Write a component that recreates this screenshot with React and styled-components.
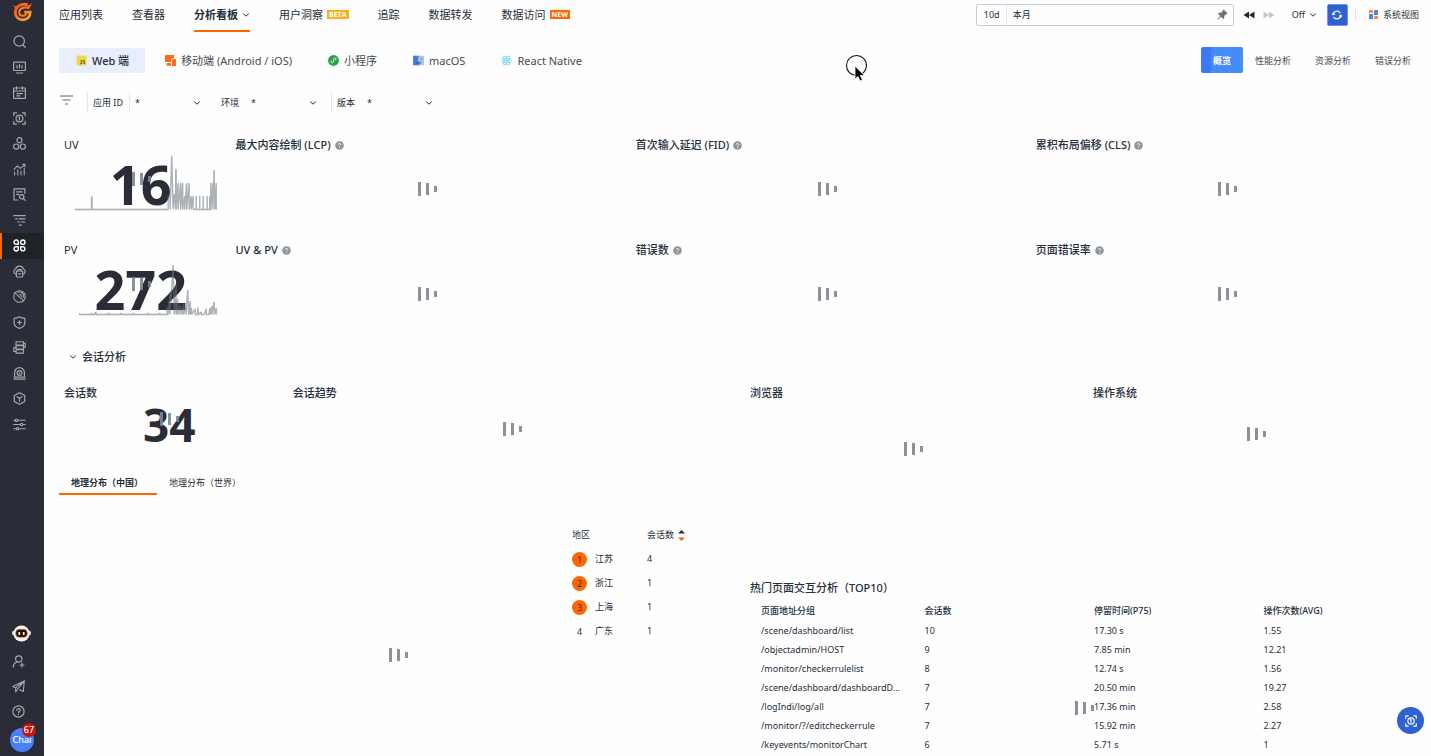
import React from "react";
import styled, { createGlobalStyle } from "styled-components";

const ink = "#242e3b";
const orange = "#ff6600";

const GlobalStyle = createGlobalStyle`
  *, *::before, *::after { box-sizing: border-box; }
  body {
    margin: 0;
    background: #fefefe;
    color: ${ink};
    font: 11px/16px "Noto Sans", "Noto Sans CJK SC", sans-serif;
  }
  h2, h3, p { margin: 0; font: inherit; }
  button, input, select { font: inherit; color: inherit; margin: 0; padding: 0; border: 0; background: none; border-radius: 0; }
  button { cursor: pointer; }
  a { color: inherit; text-decoration: none; }
  svg { display: block; flex: none; }
`;

/* ---------- shell ---------- */

const Page = styled.div`
  display: flex;
  height: 100vh;
  overflow: hidden;
`;

const Sidebar = styled.aside`
  display: flex;
  flex-direction: column;
  flex: none;
  width: 44px;
  background: #2a2d38;
  color: #a5a8ad;
`;

const LogoBox = styled.a`
  display: flex;
  justify-content: center;
  height: 29px;
  padding-top: 2px;
`;

const SideNav = styled.nav`
  display: grid;
  grid-auto-rows: 1fr;
  height: 408px;
`;

const SideItem = styled.a`
  display: flex;
  align-items: center;
  padding-left: 11px;
  border-left: 2px solid ${(p) => (p.$active ? orange : "transparent")};
  background: ${(p) => (p.$active ? "#1f2328" : "transparent")};
  color: ${(p) => (p.$active ? "#fff" : "inherit")};
`;

const SideFooter = styled.div`
  display: flex;
  flex-direction: column;
  margin-top: auto;
  padding-bottom: 4px;
`;

const FooterItem = styled.button`
  display: flex;
  align-items: center;
  height: ${(p) => (p.$tall ? 32 : 25)}px;
  padding-left: 12px;
`;

const Avatar = styled.button`
  position: relative;
  align-self: center;
  width: 24px;
  height: 24px;
  margin-top: 4px;
  border-radius: 50%;
  background: #4a80f5;
  color: #fff;
  font-size: 9px;
  font-weight: 500;
  line-height: 24px;
`;

const AvatarBadge = styled.span`
  position: absolute;
  top: -5px;
  right: -2px;
  width: 14px;
  height: 14px;
  border-radius: 50%;
  background: #c81010;
  font-size: 9px;
  line-height: 14px;
`;

const Main = styled.main`
  flex: 1;
  min-width: 0;
  padding: 0 8px 0 15px;
`;

/* ---------- header ---------- */

const Header = styled.header`
  display: flex;
  justify-content: space-between;
  height: 32px;
`;

const TopNav = styled.nav`
  display: flex;
  gap: 29px;
`;

const TopLink = styled.a`
  display: flex;
  align-items: center;
  gap: 4px;
  height: 32px;
  padding-bottom: ${(p) => (p.$active ? 1 : 3)}px;
  border-bottom: ${(p) => (p.$active ? `2px solid ${orange}` : "0")};
  font-weight: ${(p) => (p.$active ? 700 : 400)};
  white-space: nowrap;
`;

const Tag = styled.span`
  height: 9px;
  padding: 0 2px;
  background: ${(p) => p.$color};
  color: #fff;
  font: 700 7px/9px "Open Sans", "Noto Sans", sans-serif;
`;

const Tools = styled.div`
  display: flex;
  align-items: center;
  height: 29px;
  font-size: 9px;
  white-space: nowrap;
`;

const TimePicker = styled.div`
  display: flex;
  align-items: center;
  width: 258px;
  height: 22px;
  border: 1px solid #c9cbd9;
  border-radius: 2px;
  padding-right: 5px;
`;

const Span = styled.label`
  width: 30px;
  padding-left: 7px;
  border-right: 1px solid #e4e5ec;
  line-height: 20px;
`;

const TimeInput = styled.input`
  flex: 1;
  min-width: 0;
  padding-left: 6px;
  outline: 0;
`;

const ToolButton = styled.button`
  display: flex;
  align-items: center;
  gap: 4px;
  margin-left: ${(p) => p.$space}px;
`;

const RefreshButton = styled.button`
  display: flex;
  align-items: center;
  justify-content: center;
  width: 21px;
  height: 22px;
  margin: 0 7px 0 10px;
  border: 1px solid #6f94ea;
  border-radius: 2px;
  background: #2f62d0;
  color: #fff;
`;

const SystemView = styled.button`
  display: flex;
  align-items: center;
  gap: 5px;
  margin-right: 4px;
  color: ${ink};
`;

const ToolDivider = styled.span`
  width: 1px;
  height: 10px;
  margin-right: 13px;
  background: #dcdde3;
`;

/* ---------- platform and view tabs ---------- */

const TabRow = styled.div`
  display: flex;
  justify-content: space-between;
  align-items: flex-end;
  margin-top: 15px;
  white-space: nowrap;
`;

const TabGroup = styled.div`
  display: flex;
  gap: ${(p) => p.$gap || 0}px;
`;

const PlatformTab = styled.button`
  display: flex;
  align-items: center;
  gap: 5px;
  height: 25px;
  padding: 0 16px 0 17px;
  background: ${(p) => (p.$active ? "#e8eefc" : "transparent")};
  color: ${(p) => (p.$active ? ink : "#454a53")};
  font-weight: ${(p) => (p.$active ? 500 : 400)};
`;

const ViewTab = styled.button`
  height: 26px;
  padding: 1px 12px 0;
  border-radius: 2px;
  background: ${(p) =>
    p.$active ? "linear-gradient(90deg, #3d78f6 24%, #468cf8 24%)" : "transparent"};
  color: ${(p) => (p.$active ? "#fff" : "#454a53")};
  font-size: 9px;
  font-weight: ${(p) => (p.$active ? 700 : 400)};
`;

/* ---------- filters ---------- */

const FilterRow = styled.div`
  display: flex;
  margin-top: 19px;
  font-size: 9px;
`;

const FilterIcon = styled.div`
  width: 28px;
  padding: 3px 0 0 1px;
`;

const Field = styled.div`
  display: flex;
  position: relative;
  width: ${(p) => (p.$wide ? 128 : 116)}px;
  height: 20px;
  border-left: 1px solid ${(p) => (p.$line ? "#dfe6f8" : "transparent")};
`;

const FieldLabel = styled.label`
  flex: none;
  padding: 0 6px 0 5px;
  border-right: 1px solid ${(p) => (p.$line ? "#dfe6f8" : "transparent")};
  line-height: 22px;
`;

const FieldSelect = styled.select`
  flex: 1;
  min-width: 0;
  height: 22px;
  padding-left: 5px;
  appearance: none;
  outline: 0;
`;

const FieldChevron = styled.span`
  position: absolute;
  right: 14px;
  top: 8px;
  pointer-events: none;
`;

/* ---------- cards ---------- */

const Grid = styled.div`
  display: grid;
  grid-template-columns: repeat(${(p) => p.$cols}, minmax(0, 1fr));
  gap: 8px;
  margin-top: ${(p) => p.$top || 0}px;
`;

const Card = styled.section`
  position: relative;
  grid-column: span ${(p) => p.$span};
  height: ${(p) => (p.$height ? `${p.$height}px` : "auto")};
`;

const CardTitle = styled.h3`
  display: flex;
  align-items: center;
  gap: 4px;
  height: 24px;
  padding: 2px 0 0 5px;
  font-weight: ${(p) => (p.$plain ? 400 : 500)};
  white-space: nowrap;
`;

const BigNumber = styled.p`
  position: relative;
  text-align: center;
  color: #2a2d38;
  font-weight: 700;
  font-size: ${(p) => p.$size}px;
  line-height: ${(p) => p.$line}px;
`;

const Spark = styled.svg`
  position: absolute;
  left: 10%;
  top: 24px;
  width: 87%;
  height: 56px;
  opacity: ${(p) => (p.$front ? 0.3 : 1)};
`;

const Loader = styled.span`
  position: absolute;
  left: 50%;
  top: ${(p) => p.$top}px;
  display: flex;
  align-items: center;
  gap: 5px;
  width: 19px;
  height: 14px;
  margin-left: -9px;
  opacity: 0.9;
`;

const Bar = styled.i`
  width: 3px;
  height: ${(p) => p.$h}px;
  background: #80868f;
`;

const GroupTitle = styled.h2`
  display: flex;
  align-items: center;
  gap: 5px;
  height: 24px;
  margin-top: 11px;
  padding-left: 10px;
  font-weight: 500;
`;

const Halves = styled.div`
  display: grid;
  grid-template-columns: repeat(2, minmax(0, 1fr));
  gap: 8px;
  margin-top: 11px;
`;

const GeoTabs = styled.div`
  display: flex;
  font-size: 9px;
`;

const GeoTab = styled.button`
  height: 24px;
  padding: 2px 14px 0 12px;
  border-bottom: 2px solid ${(p) => (p.$active ? orange : "transparent")};
  font-weight: ${(p) => (p.$active ? 700 : 400)};
`;

const GeoBody = styled.div`
  display: flex;
  justify-content: flex-end;
  padding-top: 28px;
`;

const RegionTable = styled.table`
  width: 165px;
  border-spacing: 0;
  table-layout: fixed;
  font-size: 9px;
  text-align: left;
  th, td { height: 24px; padding: 0; font-weight: 400; }
  th:first-child { width: 75px; }
`;

const Inline = styled.span`
  display: flex;
  align-items: center;
  gap: ${(p) => p.$gap}px;
`;

const Rank = styled.span`
  width: 15px;
  height: 15px;
  border-radius: 50%;
  background: ${(p) => (p.$top ? orange : "transparent")};
  text-align: center;
  line-height: 15px;
`;

const PageTable = styled.table`
  width: 100%;
  border-spacing: 0;
  table-layout: fixed;
  font-size: 9px;
  text-align: left;
  th, td {
    height: 19px;
    padding: 0 10px;
    line-height: 18px;
    overflow: hidden;
    text-overflow: ellipsis;
    white-space: nowrap;
  }
  th { height: 22px; padding-top: 1px; font-weight: 500; }
  th:first-child, td:first-child { padding-left: 16px; }
`;

/* ---------- overlays ---------- */

const Pointer = styled.svg`
  position: fixed;
  left: 845px;
  top: 54px;
  pointer-events: none;
`;

const FloatButton = styled.button`
  position: fixed;
  right: 7px;
  bottom: 22px;
  display: flex;
  align-items: center;
  justify-content: center;
  width: 27px;
  height: 27px;
  border-radius: 50%;
  background: #2f62d0;
  color: #fff;
`;

/* ---------- icons ---------- */

const Icon = ({ size = 13, w = 1.2, children }) => (
  <svg width={size} height={size} viewBox="0 0 13 13" fill="none" stroke="currentColor"
    strokeWidth={w} strokeLinecap="round" strokeLinejoin="round" aria-hidden="true">
    {children}
  </svg>
);

const Chevron = () => (
  <svg width="8" height="6" viewBox="0 0 8 6" fill="none" stroke="currentColor" aria-hidden="true">
    <path d="M1.2 1.5 4 4.2 6.8 1.5" />
  </svg>
);

const ScanIcon = (props) => (
  <Icon {...props}>
    <path d="M.8 3.6V.9h2.7M9.5.9h2.7v2.7M12.2 9.4v2.7H9.5M3.5 12.1H.8V9.4" />
    <circle cx="6.5" cy="6.5" r="3.4" />
    <path d="M6.5 5v3M5.8 5.2h.7" />
  </Icon>
);

const sideIcons = [
  ["搜索", <Icon><circle cx="6.2" cy="6" r="5.2" /><path d="m10 10 2.3 2.2" /></Icon>],
  ["仪表", <Icon><rect x=".6" y="1.2" width="11.8" height="8.3" rx=".4" /><path d="M4 4.5v2.4M6.5 3.7v3.2M9 4.5v2.4M3.3 12h6.4" /></Icon>],
  ["日程", <Icon><rect x=".6" y="2" width="11.8" height="10.3" rx=".4" /><path d="M.8 5h11.4M3.6.8v2.4M9.4.8v2.4M3.8 7.6h5.6M3.8 9.8h3" /></Icon>],
  ["扫描", <ScanIcon />],
  ["基础设施", <Icon><circle cx="6.5" cy="3.2" r="2.5" /><circle cx="3.2" cy="9.6" r="2.6" /><circle cx="9.8" cy="9.6" r="2.6" /></Icon>],
  ["指标", <Icon w={1.1}><path d="M1.6 12V9M4.8 12V6.8M8 12V8M11.2 12V5M1 6.4 4.4 3l3 2.4L12 1.6M9.8 1.4H12v2" /></Icon>],
  ["日志", <Icon><path d="M4.8 12H1V.9h10.9v4.6M3.6 3.8h5.6M3.6 6.4h2" /><circle cx="8.7" cy="8.8" r="2.2" /><path d="m10.4 10.5 1.8 1.8" /></Icon>],
  ["链路", <Icon><path d="M.7 1.7h11.6M2.6 4.8h1.6M6 4.8h6M4.7 8h2M8.6 8h3.2M6.4 11.2h2" /></Icon>],
  ["应用", <Icon w={1.4}><path d="M1 3.2a2.1 2.1 0 1 1 4.3 0v2.1H3.1A2.1 2.1 0 0 1 1 3.2ZM1 9.8a2.1 2.1 0 0 1 2.1-2.1h2.2v2.1a2.1 2.1 0 1 1-4.3 0Z" /><circle cx="9.8" cy="3.2" r="2.2" /><path d="M7.7 7.7h2.1a2.1 2.1 0 1 1-2.1 2.1Z" /></Icon>],
  ["云", <Icon><path d="M2.8 9A2.6 2.6 0 0 1 2.6 4a4.1 4.1 0 0 1 7.8 0 2.6 2.6 0 0 1-.2 5" /><rect x="3.4" y="6" width="6.2" height="6" rx=".4" /><path d="M5 6V4.5h3V6M5.4 8.8h2.2" /></Icon>],
  ["拨测", <Icon w={1.1}><circle cx="6.5" cy="6.5" r="5.8" /><path d="m1.9 2.9 8.9 8M5 2.2a4.6 4.6 0 0 1 5.8 5.3M6.4 4.5a2.6 2.6 0 0 1 2.4 2.2" /></Icon>],
  ["安全", <Icon><path d="M6.5.7c1.5 1.1 3.3 1.6 5.4 1.6v4.4c0 2.5-2 4.5-5.4 5.7-3.4-1.2-5.4-3.2-5.4-5.7V2.3C3.2 2.3 5 1.8 6.5.7ZM6.5 4.5v4M4.5 6.5h4" /></Icon>],
  ["数据", <Icon w={1.1}><rect x="3" y=".8" width="7.5" height="3.3" /><rect x="3" y="4.8" width="7.5" height="3.3" /><rect x="3" y="8.8" width="7.5" height="3.3" /><path d="M10.5 2.4h1.7v4h-1.7M3 6.5H.8v4H3" /></Icon>],
  ["告警", <Icon><path d="M1.6 10V5.5a4.9 4.9 0 0 1 9.8 0V10M1 10.2h11M1 12.2h11" /><circle cx="6.5" cy="6" r="2.4" /><path d="M6.5 5.6v.8" /></Icon>],
  ["集成", <Icon><path d="m6.5.7 5.2 2.9v5.8l-5.2 2.9-5.2-2.9V3.6ZM4 4.8l2.5 1.5L9 4.8M6.5 6.3v2.9" /></Icon>],
  ["管理", <Icon w={1.1}><path d="M.7 2.2h1.6M4.7 2.2h7.6M.7 6.5h6.6M9.9 6.5h2.4M.7 10.8h2.6M5.8 10.8h6.5" /><circle cx="3.5" cy="2.2" r="1.2" /><circle cx="8.6" cy="6.5" r="1.2" /><circle cx="4.6" cy="10.8" r="1.2" /></Icon>],
];

const Logo = () => (
  <svg width="19" height="20" viewBox="0 0 19 20" fill="none" aria-label="logo">
    <defs>
      <linearGradient id="flame" x1="0" y1="0" x2="1" y2="1">
        <stop offset="0" stopColor="#ff4a1f" /><stop offset=".5" stopColor="#ff7a1a" /><stop offset="1" stopColor="#ffb01f" />
      </linearGradient>
    </defs>
    <path d="M14.500 2.700C8.500 1 2.300 4.500 2.300 10.500c0 4.400 3.200 7.300 7.200 7.300 4.600 0 7.700-3 7.700-7.700h-6" stroke="url(#flame)" strokeWidth="2.800" />
    <path d="M16.500 6.200c-5.200-1.800-10.300 0-10.300 4.100 0 2.100 1.500 3.500 3.500 3.500 1.900 0 3.200-1 3.600-2.600" stroke="#ff7d1c" strokeWidth="2" />
    <path d="M12.500 2.800c2.500.8 4.300.3 6-1.800-.1 3.300-1.500 5.300-4 5.700ZM.500 3.200l4.500 2-2 2.800Z" fill="#ff5a1f" />
  </svg>
);

const Robot = () => (
  <svg width="19" height="17" viewBox="0 0 19 17" aria-hidden="true">
    <rect y="5.500" width="19" height="5" rx="2.500" fill="#ddd" />
    <circle cx="9.500" cy="8.500" r="8" fill="#f7f7f7" />
    <rect x="3.700" y="4.300" width="11.600" height="8" rx="3.500" fill="#17110f" stroke="#f47b20" strokeWidth=".8" />
    <path d="M7.300 7v3M11.700 7v3" stroke="#fff" strokeWidth="1.700" />
  </svg>
);

const platformIcons = {
  js: <svg width="11" height="11" viewBox="0 0 11 11" aria-hidden="true"><rect width="10" height="10" x=".5" y=".5" rx="1" fill="#f0d84a" /><path d="M5.300 5v3.200q0 .9-1.500.6M8.900 5.500q-1.900-.7-2 .3c0 1 2 .7 2 1.800 0 1-1.300 1.200-2.300.6" fill="none" stroke="#4a4320" strokeWidth=".9" /></svg>,
  mobile: <svg width="11" height="11" viewBox="0 0 11 11" aria-hidden="true"><path d="M0 0h9v3.200H6V7H0Z" fill="#ff6a13" /><path d="M1.500 8H6v2.700H1.500Z" fill="#ff6a13" /><rect x="7" y="4" width="4" height="7" rx=".5" fill="#ff6a13" /></svg>,
  mini: <svg width="11" height="11" viewBox="0 0 12 12" aria-hidden="true"><circle cx="6" cy="6" r="5.900" fill="#2aa245" /><path d="M6 7.300c0 1.700-2.700 1.500-2.700.1 0-.7.600-1 1.200-1.200M6 7.300V4.700c0-1.600 2.700-1.500 2.700-.1 0 .7-.6 1-1.200 1.200" stroke="#fff" fill="none" strokeWidth=".9" /></svg>,
  mac: <svg width="11" height="11" viewBox="0 0 11 11" aria-hidden="true"><rect y=".8" width="11" height="9.400" fill="#a9c5ea" /><path d="M0 .8h6.200C5.500 2.500 5 4 5 6h1.500l-.1 4.200H0Z" fill="#4d84d1" /><path d="M2.800 3v1.300M8.300 3v1.300M2.200 7.200c2 1.500 4.600 1.500 6.600 0" stroke="#24406e" strokeWidth=".7" fill="none" /></svg>,
  react: <svg width="11" height="11" viewBox="0 0 12 12" fill="none" stroke="#62d2f5" strokeWidth=".8" aria-hidden="true"><ellipse cx="6" cy="6" rx="5.500" ry="2.200" /><ellipse cx="6" cy="6" rx="5.500" ry="2.200" transform="rotate(60 6 6)" /><ellipse cx="6" cy="6" rx="5.500" ry="2.200" transform="rotate(120 6 6)" /><circle cx="6" cy="6" r=".9" fill="#62d2f5" /></svg>,
};

const Help = () => (
  <svg width="9" height="9" viewBox="0 0 9 9" aria-hidden="true">
    <circle cx="4.500" cy="4.500" r="4.300" fill="#8f9298" />
    <path d="M3.200 3.600c.1-1.600 2.600-1.500 2.600 0 0 .8-1.200.9-1.200 1.700M4.600 6.200v.9" fill="none" stroke="#fff" strokeWidth=".9" />
  </svg>
);

const Pin = () => (
  <svg width="11" height="11" viewBox="0 0 11 11" fill="#6d7078" aria-hidden="true">
    <path d="m6.600.4 4 4-.9.9-.8-.1-1.700 1.700.1 2-1.100 1.100-2.200-2.200L.7 10.700.300 10.300 3.200 7 1 4.800l1.100-1.100 2 .1 1.700-1.700-.1-.8Z" />
  </svg>
);

const Skip = ({ flip }) => (
  <svg width="12" height="8" viewBox="0 0 12 8" fill={flip ? "#c4c6cb" : "#1f2733"} aria-hidden="true">
    <path d={flip ? "M.5.5 6 4 .5 7.5ZM6 .5 11.5 4 6 7.5Z" : "M6 .5.5 4 6 7.5ZM11.5.5 6 4l5.500 3.500Z"} />
  </svg>
);

const Wait = ({ top }) => (
  <Loader $top={top} role="status" aria-label="loading">
    <Bar $h={14} /><Bar $h={12} /><Bar $h={6} />
  </Loader>
);

/* ---------- data ---------- */

const topLinks = [
  { name: "应用列表" }, { name: "查看器" }, { name: "分析看板", active: true },
  { name: "用户洞察", tag: "BETA", color: "#ffb020" }, { name: "追踪" }, { name: "数据转发" },
  { name: "数据访问", tag: "NEW", color: orange },
];

const platforms = [
  ["js", "Web 端"], ["mobile", "移动端 (Android / iOS)"], ["mini", "小程序"], ["mac", "macOS"], ["react", "React Native"],
];

const filters = [
  { id: "app", label: "应用 ID", wide: true, line: true, inner: true },
  { id: "env", label: "环境" },
  { id: "version", label: "版本", line: true },
];

const uvLine = "M0 53.5H16.5V41H17V53.5H93V40H95V53.5L96.5 0 98 53.5 99 38 100.5 53.5V14H101V53.5L103 27V53.5L105.5 27V53.5L107.500 27V53.5L109.5 40V53.5L111.500 27V53.5L114 27V53.5L116 40V53.500L118 40V53.5H121V40V53.5H124.5V40V53.5H128V40V53.5H132V40V53.5H134.500V40V53.500H135.500V27V53.5L137.500 27V53.5L139 14 139.500 53.5 141 27V53.5";
const pvLine = "M4 52.500 5 53.5H16V52.500H17V53.5H20V51.500H21V53.5H33V52.500H34V53.5H45V52.500H46V53.5H58V52.500H59V53.5H72V52.500H73V53.5H84V52.500H85V53.5H92V47H93V53.5L95 32V53.5L98 4 99 53.5 101 24V53.5L102.500 38V53.5L105 44V53.5L107 47V53.5L108.5 43V53.5L110 46 111 53.5 112.5 29 113.5 53.5 115 40V53.5L116.5 47V53.5L120 48V53.5H122.500V46.500L123.500 53.5 126 51V53.5H129L131 48V53.5H133.500L135 47V53.5L136.500 45V53.5L139 41V53.5L141 47V53.5";

const regions = [["江苏", 4], ["浙江", 1], ["上海", 1], ["广东", 1]];

const pages = [
  ["/scene/dashboard/list", "10", "17.30 s", "1.55"],
  ["/objectadmin/HOST", "9", "7.85 min", "12.21"],
  ["/monitor/checkerrulelist", "8", "12.74 s", "1.56"],
  ["/scene/dashboard/dashboardD...", "7", "20.50 min", "19.27"],
  ["/logIndi/log/all", "7", "17.36 min", "2.58"],
  ["/monitor/?/editcheckerrule", "7", "15.92 min", "2.27"],
  ["/keyevents/monitorChart", "6", "5.71 s", "1"],
];

const Trend = ({ d, front }) => (
  <Spark viewBox="0 0 142 56" preserveAspectRatio="none" $front={front} aria-hidden="true">
    <path d={d} fill="none" stroke="#abb1b6" strokeWidth="1.3" strokeLinejoin="bevel" />
  </Spark>
);

const StatCard = ({ title, value, line }) => (
  <Card $span={3} $height={97}>
    <CardTitle $plain>{title}</CardTitle>
    <Trend d={line} />
    <BigNumber $size={54} $line={56}>{value}</BigNumber>
    <Trend d={line} front />
    <Wait top={40} />
  </Card>
);

const ChartCard = ({ title, span = 7, height = 97, wait = 50, help }) => (
  <Card $span={span} $height={height}>
    <CardTitle>{title}{help && <Help />}</CardTitle>
    <Wait top={wait} />
  </Card>
);

export default function App() {
  return (
    <Page>
      <GlobalStyle />
      <Sidebar>
        <LogoBox href="#" aria-label="首页"><Logo /></LogoBox>
        <SideNav>
          {sideIcons.map(([name, icon], i) => (
            <SideItem key={name} href="#" aria-label={name} $active={i === 8}>{icon}</SideItem>
          ))}
        </SideNav>
        <SideFooter>
          <FooterItem $tall aria-label="助手"><Robot /></FooterItem>
          <FooterItem aria-label="邀请成员">
            <Icon><circle cx="6.8" cy="4" r="3.2" /><path d="M1.2 12c.2-2.600 1.600-4.300 3.800-5M8 10h4M10 8v4" /></Icon>
          </FooterItem>
          <FooterItem aria-label="发送">
            <Icon w={1.1}><path d="M12.3.9.7 6.6l3 1.300L12.3.9l-1 10.500-3.800-1.700M3.700 7.9V12l2-3L12.3.9" /></Icon>
          </FooterItem>
          <FooterItem aria-label="帮助">
            <Icon><circle cx="6.5" cy="6.5" r="5.6" /><path d="M4.900 5.300c0-2.200 3.300-2.100 3.300-.1 0 1.200-1.700 1.200-1.700 2.500M6.500 9.300v.2" /></Icon>
          </FooterItem>
          <Avatar>Chai<AvatarBadge>67</AvatarBadge></Avatar>
        </SideFooter>
      </Sidebar>

      <Main>
        <Header>
          <TopNav>
            {topLinks.map((t) => (
              <TopLink key={t.name} href="#" $active={t.active}>
                {t.name}
                {t.active && <Chevron />}
                {t.tag && <Tag $color={t.color}>{t.tag}</Tag>}
              </TopLink>
            ))}
          </TopNav>
          <Tools>
            <TimePicker>
              <Span htmlFor="time">10d</Span>
              <TimeInput id="time" defaultValue="本月" />
              <Pin />
            </TimePicker>
            <ToolButton $space={9} aria-label="后退"><Skip /></ToolButton>
            <ToolButton $space={8} aria-label="前进"><Skip flip /></ToolButton>
            <ToolButton $space={17}>Off <Chevron /></ToolButton>
            <RefreshButton aria-label="刷新">
              <Icon size={10} w={1.5}><path d="M1.500 6a5 5 0 0 1 9-2.500M11.500 7a5 5 0 0 1-9 2.500M.3 4.500 1.500 6.300l2-1M12.700 8.500l-1.200-1.800-2 1" /></Icon>
            </RefreshButton>
            <ToolDivider />
            <SystemView>
              <svg width="9" height="9" viewBox="0 0 9 9" aria-hidden="true">
                <path d="M0 0h4v3H0ZM5 6h4v3H5Z" fill="#ff8b4a" /><path d="M5 0h4v5H5ZM0 4h4v5H0Z" fill="#4c84ee" />
              </svg>
              系统视图
            </SystemView>
          </Tools>
        </Header>

        <TabRow>
          <TabGroup $gap={3}>
            {platforms.map(([icon, name], i) => (
              <PlatformTab key={name} $active={i === 0}>{platformIcons[icon]}{name}</PlatformTab>
            ))}
          </TabGroup>
          <TabGroup>
            {["概览", "性能分析", "资源分析", "错误分析"].map((name, i) => (
              <ViewTab key={name} $active={i === 0}>{name}</ViewTab>
            ))}
          </TabGroup>
        </TabRow>

        <FilterRow>
          <FilterIcon>
            <svg width="13" height="10" viewBox="0 0 13 10" stroke="#5c626c" strokeWidth="1.2" aria-hidden="true">
              <path d="M0 1h13M2.500 5h8M5 9h3" />
            </svg>
          </FilterIcon>
          {filters.map((f) => (
            <Field key={f.id} $wide={f.wide} $line={f.line}>
              <FieldLabel htmlFor={f.id} $line={f.inner}>{f.label}</FieldLabel>
              <FieldSelect id={f.id} defaultValue="*"><option>*</option></FieldSelect>
              <FieldChevron><Chevron /></FieldChevron>
            </Field>
          ))}
        </FilterRow>

        <Grid $cols={24} $top={20}>
          <StatCard title="UV" value="16" line={uvLine} />
          <ChartCard title="最大内容绘制 (LCP)" help />
          <ChartCard title="首次输入延迟 (FID)" help />
          <ChartCard title="累积布局偏移 (CLS)" help />
          <StatCard title="PV" value="272" line={pvLine} />
          <ChartCard title="UV & PV" help />
          <ChartCard title="错误数" help />
          <ChartCard title="页面错误率" help />
        </Grid>

        <GroupTitle><Chevron />会话分析</GroupTitle>

        <Halves>
          <div>
            <Grid $cols={12}>
              <Card $span={4} $height={91}>
                <CardTitle>会话数</CardTitle>
                <BigNumber $size={46} $line={40}>34</BigNumber>
                <Wait top={32} />
              </Card>
              <ChartCard title="会话趋势" span={8} height={91} wait={42} />
            </Grid>
            <Card>
              <GeoTabs>
                <GeoTab $active>地理分布（中国）</GeoTab>
                <GeoTab>地理分布（世界）</GeoTab>
              </GeoTabs>
              <GeoBody>
                <RegionTable>
                  <thead>
                    <tr>
                      <th>地区</th>
                      <th>
                        <Inline $gap={4}>
                          会话数
                          <svg width="7" height="11" viewBox="0 0 7 11" aria-hidden="true">
                            <path d="M0 3.500 3.500 0 7 3.500Z" fill={ink} /><path d="M0 7.500h7L3.500 11Z" fill={orange} />
                          </svg>
                        </Inline>
                      </th>
                    </tr>
                  </thead>
                  <tbody>
                    {regions.map(([name, count], i) => (
                      <tr key={name}>
                        <td><Inline $gap={8}><Rank $top={i < 3}>{i + 1}</Rank>{name}</Inline></td>
                        <td>{count}</td>
                      </tr>
                    ))}
                  </tbody>
                </RegionTable>
              </GeoBody>
              <Wait top={177} />
            </Card>
          </div>
          <div>
            <Grid $cols={2}>
              <ChartCard title="浏览器" span={1} height={187} wait={62} />
              <ChartCard title="操作系统" span={1} height={187} wait={47} />
            </Grid>
            <Grid $cols={1} $top={8}>
              <Card $span={1}>
                <CardTitle>热门页面交互分析（TOP10）</CardTitle>
                <PageTable>
                  <thead>
                    <tr><th>页面地址分组</th><th>会话数</th><th>停留时间(P75)</th><th>操作次数(AVG)</th></tr>
                  </thead>
                  <tbody>
                    {pages.map((row) => (
                      <tr key={row[0]}>{row.map((cell, i) => <td key={i}>{cell}</td>)}</tr>
                    ))}
                  </tbody>
                </PageTable>
                <Wait top={126} />
              </Card>
            </Grid>
          </div>
        </Halves>
      </Main>

      <Pointer width="22" height="30" viewBox="0 0 22 30" aria-hidden="true">
        <circle cx="11.500" cy="11.500" r="10" fill="none" stroke="#111" strokeWidth="1.100" />
        <path d="M10 12v13l3-2.600 2 4.600 2.400-1-2-4.500h4Z" fill="#000" stroke="#fff" strokeWidth=".8" />
      </Pointer>
      <FloatButton aria-label="扫描"><ScanIcon size={12} /></FloatButton>
    </Page>
  );
}
